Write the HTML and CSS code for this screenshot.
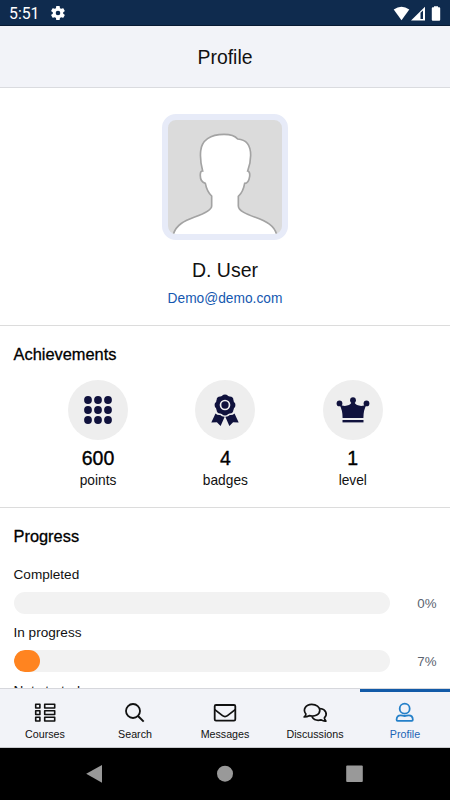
FILE: index.html
```html
<!DOCTYPE html>
<html lang="en">
<head>
<meta charset="utf-8">
<title>Profile</title>
<link rel="stylesheet" href="styles.css">
</head>
<body>
<div class="phone">
  <div class="status">
    <span class="clock">5:51</span>
    <svg class="gear" viewBox="2 2 20 20"><path fill="#fff" d="M19.4 13a7.500 7.500 0 0 0 0-2l2.100-1.600a.5.5 0 0 0 .1-.6l-2-3.500a.5.5 0 0 0-.6-.2l-2.500 1a7 7 0 0 0-1.700-1L14.400 2.400a.5.5 0 0 0-.5-.4h-4a.5.5 0 0 0-.5.4L9.100 5.100a8 8 0 0 0-1.700 1l-2.500-1a.5.5 0 0 0-.6.2l-2 3.500a.5.5 0 0 0 .1.6L4.600 11a8 8 0 0 0 0 2l-2.200 1.600a.5.5 0 0 0-.1.600l2 3.500c.1.2.4.3.6.2l2.500-1a7 7 0 0 0 1.700 1l.3 2.700c0 .2.2.4.5.4h4c.3 0 .5-.2.500-.4l.4-2.700a7 7 0 0 0 1.700-1l2.500 1c.2.1.5 0 .6-.2l2-3.500a.5.5 0 0 0-.1-.6zM12 15.300a3.300 3.300 0 1 1 0-6.600 3.300 3.300 0 0 1 0 6.600z"/></svg>
    <svg class="signals" viewBox="0 0 50 16">
      <path fill="#fff" d="M.7 3.600Q8.500-2.200 16.300 3.600L8.500 14.200z"/>
      <path fill="#fff" fill-rule="evenodd" d="M18 14.500L32 .7V14.500zM27.500 6.800V13h2.500V4.500z"/>
      <path fill="#fff" d="M41 1.200V.3h4v.9h1.200a1 1 0 0 1 1 1v11.500a1 1 0 0 1-1 1h-6.400a1 1 0 0 1-1-1V2.200a1 1 0 0 1 1-1z"/>
    </svg>
  </div>
  <header class="header"><h1>Profile</h1></header>
  <main class="content">
    <section class="user">
      <div class="avatar">
        <svg viewBox="54 60 342 342"><path fill="#fff" stroke="#a3a3a3" stroke-width="5" d="M69 408C75 374 107 361 134 351C154 344 185 333 185 318V288C176 280 169 265 166 250C155 247 150 236 151 222C151 216 154 213 158 213C153 195 150 174 152 153C155 121 181 103 222 103C242 103 255 107 263 117C294 119 302 139 302 166C302 185 298 200 293 213C298 214 300 220 299 229C297 243 291 250 284 250C281 267 275 280 265 289V318C265 333 292 343 316 352C348 364 375 376 381 408z"/></svg>
      </div>
      <h2>D. User</h2>
      <a class="email">Demo@demo.com</a>
    </section>
    <section class="achievements">
      <h3>Achievements</h3>
      <div class="stats">
        <div class="stat">
          <div class="disc"><svg viewBox="0 0 60 60" fill="#10123d"><circle cx="20" cy="20" r="3.900"/><circle cx="30" cy="20" r="3.900"/><circle cx="40" cy="20" r="3.900"/><circle cx="20" cy="30" r="3.900"/><circle cx="30" cy="30" r="3.900"/><circle cx="40" cy="30" r="3.900"/><circle cx="20" cy="40" r="3.900"/><circle cx="30" cy="40" r="3.900"/><circle cx="40" cy="40" r="3.900"/></svg></div>
          <strong>600</strong><span>points</span>
        </div>
        <div class="stat">
          <div class="disc"><svg viewBox="0 0 60 60" fill="#10123d"><path d="M20.500 33.500L16.300 42.500L21.900 42.300L25.600 46L29.700 36.800Q27 37 25.200 35Q22.500 35.500 20.500 33.500zM39.500 33.500L43.700 42.500L38.100 42.300L34.400 46L30.300 36.800Q33 37 34.800 35Q37.500 35.500 39.500 33.500z"/><circle cx="30" cy="25" r="9.500"/><circle cx="30" cy="18.200" r="3.600"/><circle cx="34.800" cy="20.200" r="3.600"/><circle cx="36.800" cy="25" r="3.600"/><circle cx="34.800" cy="29.800" r="3.600"/><circle cx="30" cy="31.800" r="3.600"/><circle cx="25.200" cy="29.800" r="3.600"/><circle cx="23.200" cy="25" r="3.600"/><circle cx="25.200" cy="20.200" r="3.600"/><circle cx="30" cy="25" r="4.500" fill="none" stroke="#eee" stroke-width="1.700"/></svg></div>
          <strong>4</strong><span>badges</span>
        </div>
        <div class="stat">
          <div class="disc"><svg viewBox="0 0 60 60" fill="#10123d"><circle cx="16.500" cy="23.400" r="2.900"/><circle cx="30" cy="20.200" r="2.900"/><circle cx="43.500" cy="23.400" r="2.900"/><path d="M16.500 24.500Q20.500 26.500 24 25.600Q28.500 24.600 28.800 21H31.200Q31.500 24.600 36 25.600Q39.500 26.500 43.500 24.500Q40.400 30 40.400 38H19.600Q19.600 30 16.500 24.500z"/><path d="M19.500 40h21v2.400h-21z"/></svg></div>
          <strong>1</strong><span>level</span>
        </div>
      </div>
    </section>
    <section class="progress">
      <h3>Progress</h3>
      <div class="label">Completed</div>
      <div class="row"><div class="track"></div><span>0%</span></div>
      <div class="label">In progress</div>
      <div class="row"><div class="track"><div class="fill" style="width:7%"></div></div><span>7%</span></div>
      <div class="label">Not started</div>
    </section>
  </main>
  <nav class="tabs">
    <div class="tab"><svg viewBox="0 0 24 20"><path d="M2.700 1.200h4.200v3.800H2.700zM11.700 1.200h10v3.800h-10zM2.700 7.700h4.200v3.800H2.700zM11.700 7.700h10v3.800h-10zM2.700 14.200h4.200v3.800H2.700zM11.700 14.200h10v3.800h-10z" stroke-width="1.600"/></svg><span>Courses</span></div>
    <div class="tab"><svg viewBox="0 0 24 20"><circle cx="10" cy="8" r="7"/><path d="M15 13l5.700 5.600" stroke-width="2"/></svg><span>Search</span></div>
    <div class="tab"><svg viewBox="0 0 24 20"><rect x="1.700" y="2" width="20.600" height="15.600" rx="1.300"/><path d="M1.800 6.600L9.500 12.600Q12 14.500 14.500 12.600L22.200 6.600"/></svg><span>Messages</span></div>
    <div class="tab"><svg viewBox="0 0 24 20"><path stroke-width="1.700" d="M1.200 14Q2.900 12.600 2.900 11C-.6 6.600 2.800 1.300 8.700 1.300C13.400 1.300 16.800 4 16.800 7.300C16.800 11.300 12.200 14 6.200 12.700Q4.200 14 1.200 14zM17.300 5.500C22.800 6.300 25 11.300 21.400 14.900Q21.500 16.600 22.900 18.100Q20.500 18.400 18.200 16.900C14 18 10.700 16.600 9 13.900"/></svg><span>Discussions</span></div>
    <div class="tab active"><svg viewBox="0 0 24 20"><circle cx="11.700" cy="5.700" r="5"/><path d="M4.500 17.900Q3.600 17.900 3.600 16.700C3.600 13.700 5.300 12.300 7.600 12.300C9.500 12.300 9.900 13 11.700 13S13.900 12.300 15.800 12.300C18.100 12.300 19.800 13.700 19.800 16.700Q19.800 17.900 18.900 17.900z"/></svg><span>Profile</span></div>
  </nav>
  <div class="system">
    <svg viewBox="0 0 18 18"><path d="M-.8 8.800L15 0V17.800z"/></svg>
    <svg viewBox="0 0 18 18"><circle cx="9" cy="8.700" r="8"/></svg>
    <svg viewBox="0 0 18 18"><rect x=".2" y=".4" width="16.600" height="16.600" rx="1"/></svg>
  </div>
</div>
</body>
</html>
```
FILE: styles.css
```css
* { box-sizing: border-box; }
body { margin: 0; font-family: "Liberation Sans", Arial, sans-serif; color: #111; background: #fff; }
h1, h2, h3 { margin: 0; font-weight: 400; }
svg { display: block; overflow: visible; }

.phone { width: 450px; height: 800px; display: flex; flex-direction: column; overflow: hidden; }

.status { height: 26px; flex: none; display: flex; align-items: center; padding: 0 4px 0 9px; background: #0f2b4e; border-bottom: 1px solid #071a33; color: #fff; }
.clock { font: 15.800px/26px Roboto, sans-serif; padding-top: 3px; width: 42px; }
.gear { width: 14px; height: 14px; margin-top: 1px; }
.signals { width: 50px; height: 16px; margin: 2px 3px 0 auto; }

.header { height: 62px; flex: none; display: flex; align-items: center; justify-content: center; padding-top: 1px; background: #f2f3f8; border-bottom: 1px solid #dadbdf; }
.header h1 { font-size: 19.400px; line-height: 24px; }

.content { flex: 1; min-height: 0; overflow: hidden; }

.user { height: 238px; padding-top: 26px; display: flex; flex-direction: column; align-items: center; border-bottom: 1px solid #dcdcdc; }
.avatar { width: 126px; height: 126px; border: 6px solid #e7ebf8; border-radius: 14px; background: #dbdbdb; overflow: hidden; }
.avatar svg { width: 114px; height: 114px; overflow: hidden; }
.user h2 { margin-top: 18px; font-size: 19.500px; line-height: 24px; }
.email { margin-top: 9px; font-size: 13.750px; line-height: 16px; color: #1558b0; }

h3 { font-size: 16.400px; line-height: 20px; -webkit-text-stroke: 0.3px #000; color: #000; }

.achievements { height: 182px; padding: 18px 0 0 13.500px; border-bottom: 1px solid #dcdcdc; }
.stats { display: flex; margin: 16px 0 0 54.500px; gap: 67.400px; }
.stat { width: 60px; flex: none; display: flex; flex-direction: column; align-items: center; }
.disc { width: 60px; height: 60px; border-radius: 50%; background: #eee; }
.stat strong { margin-top: 6px; font-size: 19.500px; line-height: 24px; font-weight: 400; color: #000; -webkit-text-stroke: 0.35px #000; }
.stat span { font-size: 13.750px; line-height: 16px; margin-top: 3px; }

.progress { padding: 18px 13.500px 0; }
.progress h3 { margin-bottom: 21px; }
.label { font-size: 13.600px; line-height: 16px; }
.row { display: flex; align-items: center; justify-content: space-between; height: 22px; margin: 9px 0 11px; color: #5b6470; font-size: 13.300px; }
.track { width: 376px; height: 22px; border-radius: 11px; background: #f2f2f2; overflow: hidden; }
.fill { height: 22px; border-radius: 11px; background: #ff8420; }

.tabs { height: 60px; flex: none; display: flex; background: #f2f3f8; border-top: 1px solid #d6d7dc; border-bottom: 1px solid #c9cace; }
.tab { flex: 1; display: flex; flex-direction: column; align-items: center; padding-top: 14px; font-size: 10.700px; line-height: 13px; }
.tab svg { width: 24px; height: 20px; margin-bottom: 5px; fill: none; stroke: #111; stroke-width: 1.8; stroke-linejoin: round; }
.tab.active { color: #1b63b5; box-shadow: inset 0 3px #125aa8; }
.tab.active svg { stroke: #2580c9; }

.system { height: 52px; flex: none; display: flex; align-items: center; justify-content: center; gap: 111.500px; background: #000; }
.system svg { width: 18px; height: 18px; fill: #999; }
```
